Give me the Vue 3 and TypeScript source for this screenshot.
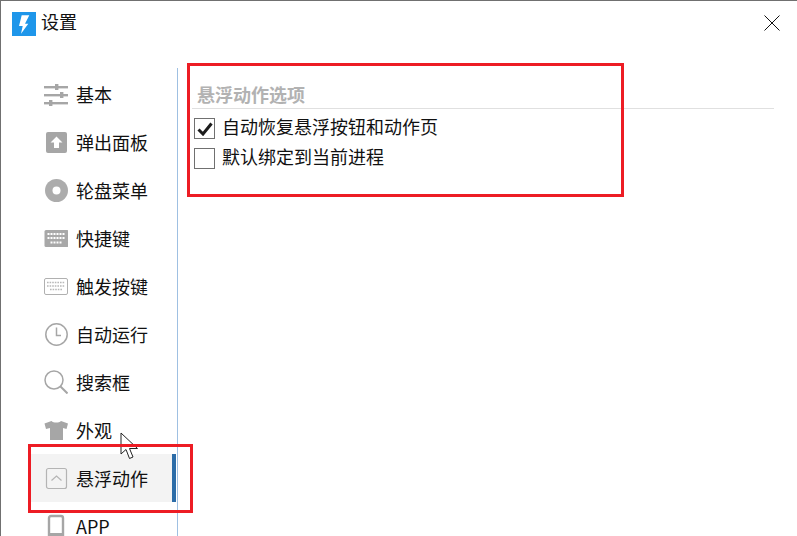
<script setup lang="ts">
const navItems = [
  { id: "basic", label: "基本" },
  { id: "popup", label: "弹出面板" },
  { id: "wheel", label: "轮盘菜单" },
  { id: "hotkey", label: "快捷键" },
  { id: "trigger", label: "触发按键" },
  { id: "autorun", label: "自动运行" },
  { id: "search", label: "搜索框" },
  { id: "look", label: "外观" },
  { id: "float", label: "悬浮动作" },
  { id: "app", label: "APP" },
];

const options = [
  { label: "自动恢复悬浮按钮和动作页", checked: true },
  { label: "默认绑定到当前进程", checked: false },
];
</script>

<template>
  <div class="window">
    <header class="titlebar">
      <svg class="logo" width="24" height="24" viewBox="0 0 24 24">
        <rect width="24" height="24" fill="#1e96ea" />
        <path d="M9.7 3.3 H17.3 L13 11.7 H16.3 L9 21.7 L10.7 14 H7 Z" fill="#fff" />
      </svg>
      <span class="title">设置</span>
      <svg class="close" width="16" height="16" viewBox="0 0 16 16">
        <path d="M0.5 0.5 L15.5 15.5 M15.5 0.5 L0.5 15.5" stroke="#111" stroke-width="1" fill="none" />
      </svg>
    </header>

    <div class="body">
      <nav class="sidebar">
        <div v-for="item in navItems" :key="item.id" class="nav-item" :class="{ active: item.id === 'float' }">
          <svg class="nav-icon" width="24" height="24" viewBox="0 0 24 24">
            <g v-if="item.id === 'basic'" fill="#a6a6a6">
              <rect x="0" y="4" width="24" height="2.4" />
              <rect x="0" y="12" width="24" height="2.4" />
              <rect x="0" y="20" width="24" height="2.4" />
              <rect x="11" y="2" width="3.4" height="6" />
              <rect x="16" y="10" width="3.4" height="6" />
              <rect x="5" y="18" width="3.4" height="6" />
            </g>
            <g v-else-if="item.id === 'popup'">
              <rect x="2" y="2" width="21" height="21" rx="2" fill="#a6a6a6" />
              <path d="M12.5 6.5 L18.5 12.5 H15 V18 H10 V12.5 H6.5 Z" fill="#fff" />
            </g>
            <g v-else-if="item.id === 'wheel'">
              <circle cx="12.5" cy="12.5" r="11.5" fill="#acacac" />
              <circle cx="12.5" cy="12.5" r="4" fill="#fff" />
            </g>
            <g v-else-if="item.id === 'hotkey'">
              <rect x="0.5" y="4" width="24" height="17" rx="1.5" fill="#a8a8a8" />
              <path d="M3.5 8 H21.5 M3.5 12 H21.5 M6.5 16.5 H18.5" stroke="#fff" stroke-width="2" stroke-dasharray="2 1" fill="none" />
            </g>
            <g v-else-if="item.id === 'trigger'">
              <rect x="0.5" y="4.5" width="23" height="16" rx="1.5" fill="#fff" stroke="#b0b0b0" />
              <path d="M3 8.5 H21 M3 12 H21 M6 15.5 H18" stroke="#b8b8b8" stroke-width="1.6" stroke-dasharray="1.6 1" fill="none" />
            </g>
            <g v-else-if="item.id === 'autorun'" fill="none" stroke="#a6a6a6" stroke-width="1.5">
              <circle cx="12.5" cy="12.5" r="10.7" />
              <path d="M12.5 5.5 V13.5 H17" />
            </g>
            <g v-else-if="item.id === 'search'" fill="none" stroke="#a6a6a6" stroke-width="1.5">
              <circle cx="10" cy="10" r="9" />
              <path d="M16.5 16.5 L23.5 23.5" stroke-width="2" />
            </g>
            <path
              v-else-if="item.id === 'look'"
              d="M7.5 3 C9.5 5 15 5 17 3 L24 5.5 L22.5 11 L19 10 V22 H6 V10 L2 11 L0.5 5.5 Z"
              fill="#a6a6a6"
            />
            <g v-else-if="item.id === 'float'">
              <rect x="2.5" y="2.5" width="20" height="20" rx="2" fill="none" stroke="#b4b4b4" stroke-width="1.2" />
              <path d="M7.5 14.5 L12.5 10 L17.5 14.5" fill="none" stroke="#b4b4b4" stroke-width="1.2" />
            </g>
            <g v-else>
              <rect x="5" y="2" width="14" height="22" rx="2" fill="none" stroke="#a6a6a6" stroke-width="2.4" />
              <rect x="5" y="19" width="14" height="5" rx="1" fill="#a6a6a6" />
            </g>
          </svg>
          <span class="nav-label">{{ item.label }}</span>
        </div>
      </nav>

      <main class="content">
        <h2 class="section-title">悬浮动作选项</h2>
        <div class="option-list">
          <label v-for="option in options" :key="option.label" class="option">
            <span class="checkbox">
              <svg v-if="option.checked" width="16" height="14" viewBox="0 0 16 14">
                <path d="M1.5 7.5 L6 12 L14.5 1.5" fill="none" stroke="#1c1c1c" stroke-width="3" />
              </svg>
            </span>
            <span class="option-label">{{ option.label }}</span>
          </label>
        </div>
      </main>
    </div>

    <!-- mouse pointer and red annotations sit on top of the dialog -->
    <svg class="pointer" width="20" height="28" viewBox="0 0 20 28">
      <path d="M1 1 V22 L6 17.5 L9.5 26.5 L13 25 L9.5 16.5 H17.5 Z" fill="#fff" stroke="#222" stroke-width="1" />
    </svg>
    <div class="mark mark-options"></div>
    <div class="mark mark-nav"></div>
  </div>
</template>

<style scoped>
.window {
  position: relative;
  width: 797px;
  height: 536px;
  box-sizing: border-box;
  border-top: 1px solid #707070;
  border-left: 1px solid #707070;
  background: #fff;
  overflow: hidden;
  color: #111;
  font-family: "Noto Sans CJK SC", "Liberation Sans", sans-serif;
  font-size: 18px;
}

.titlebar {
  display: flex;
  align-items: center;
  height: 45px;
  padding: 0 17px 0 11px;
}

.logo {
  flex: none;
}

.title {
  margin-left: 5px;
  padding-bottom: 5px;
  line-height: 24px;
}

.close {
  margin-left: auto;
  margin-bottom: 1px;
}

.body {
  display: flex;
  margin-top: 22px;
}

.sidebar {
  flex: none;
  width: 177px;
  height: 600px;
  box-sizing: border-box;
  padding: 2px 1px 0 30px;
  border-right: 1px solid #9fc0e2;
}

.nav-item {
  display: flex;
  align-items: center;
  height: 48px;
  padding-left: 13px;
  box-sizing: border-box;
}

.nav-item.active {
  background: #f3f3f3;
  border-right: 4px solid #2b6ca8;
}

.nav-icon {
  flex: none;
}

.nav-label {
  margin-left: 8px;
}

.content {
  flex: 1;
  padding: 14px 23px 0 14px;
}

.section-title {
  margin: 0;
  padding: 0 0 0 5px;
  height: 26px;
  line-height: 24px;
  border-bottom: 1px solid #e0e0e0;
  color: #b2b2b2;
  font-size: 18px;
  font-weight: 700;
}

.option-list {
  display: flex;
  flex-direction: column;
  gap: 9px;
  margin-top: 9px;
  padding-left: 2px;
}

.option {
  display: flex;
  align-items: center;
  height: 21px;
}

.option-label {
  padding-bottom: 5px;
}

.checkbox {
  display: flex;
  align-items: center;
  justify-content: center;
  width: 21px;
  height: 21px;
  box-sizing: border-box;
  margin-right: 7px;
  border: 1px solid #707070;
  background: #fff;
}

.mark {
  position: absolute;
  box-sizing: border-box;
  border: 3px solid #ed1c24;
}

.mark-options {
  left: 186px;
  top: 62px;
  width: 437px;
  height: 134px;
}

.mark-nav {
  left: 27px;
  top: 443px;
  width: 165px;
  height: 69px;
}

.pointer {
  position: absolute;
  left: 119px;
  top: 431px;
}
</style>

<style>
html,
body {
  margin: 0;
  background: #fff;
}
</style>
